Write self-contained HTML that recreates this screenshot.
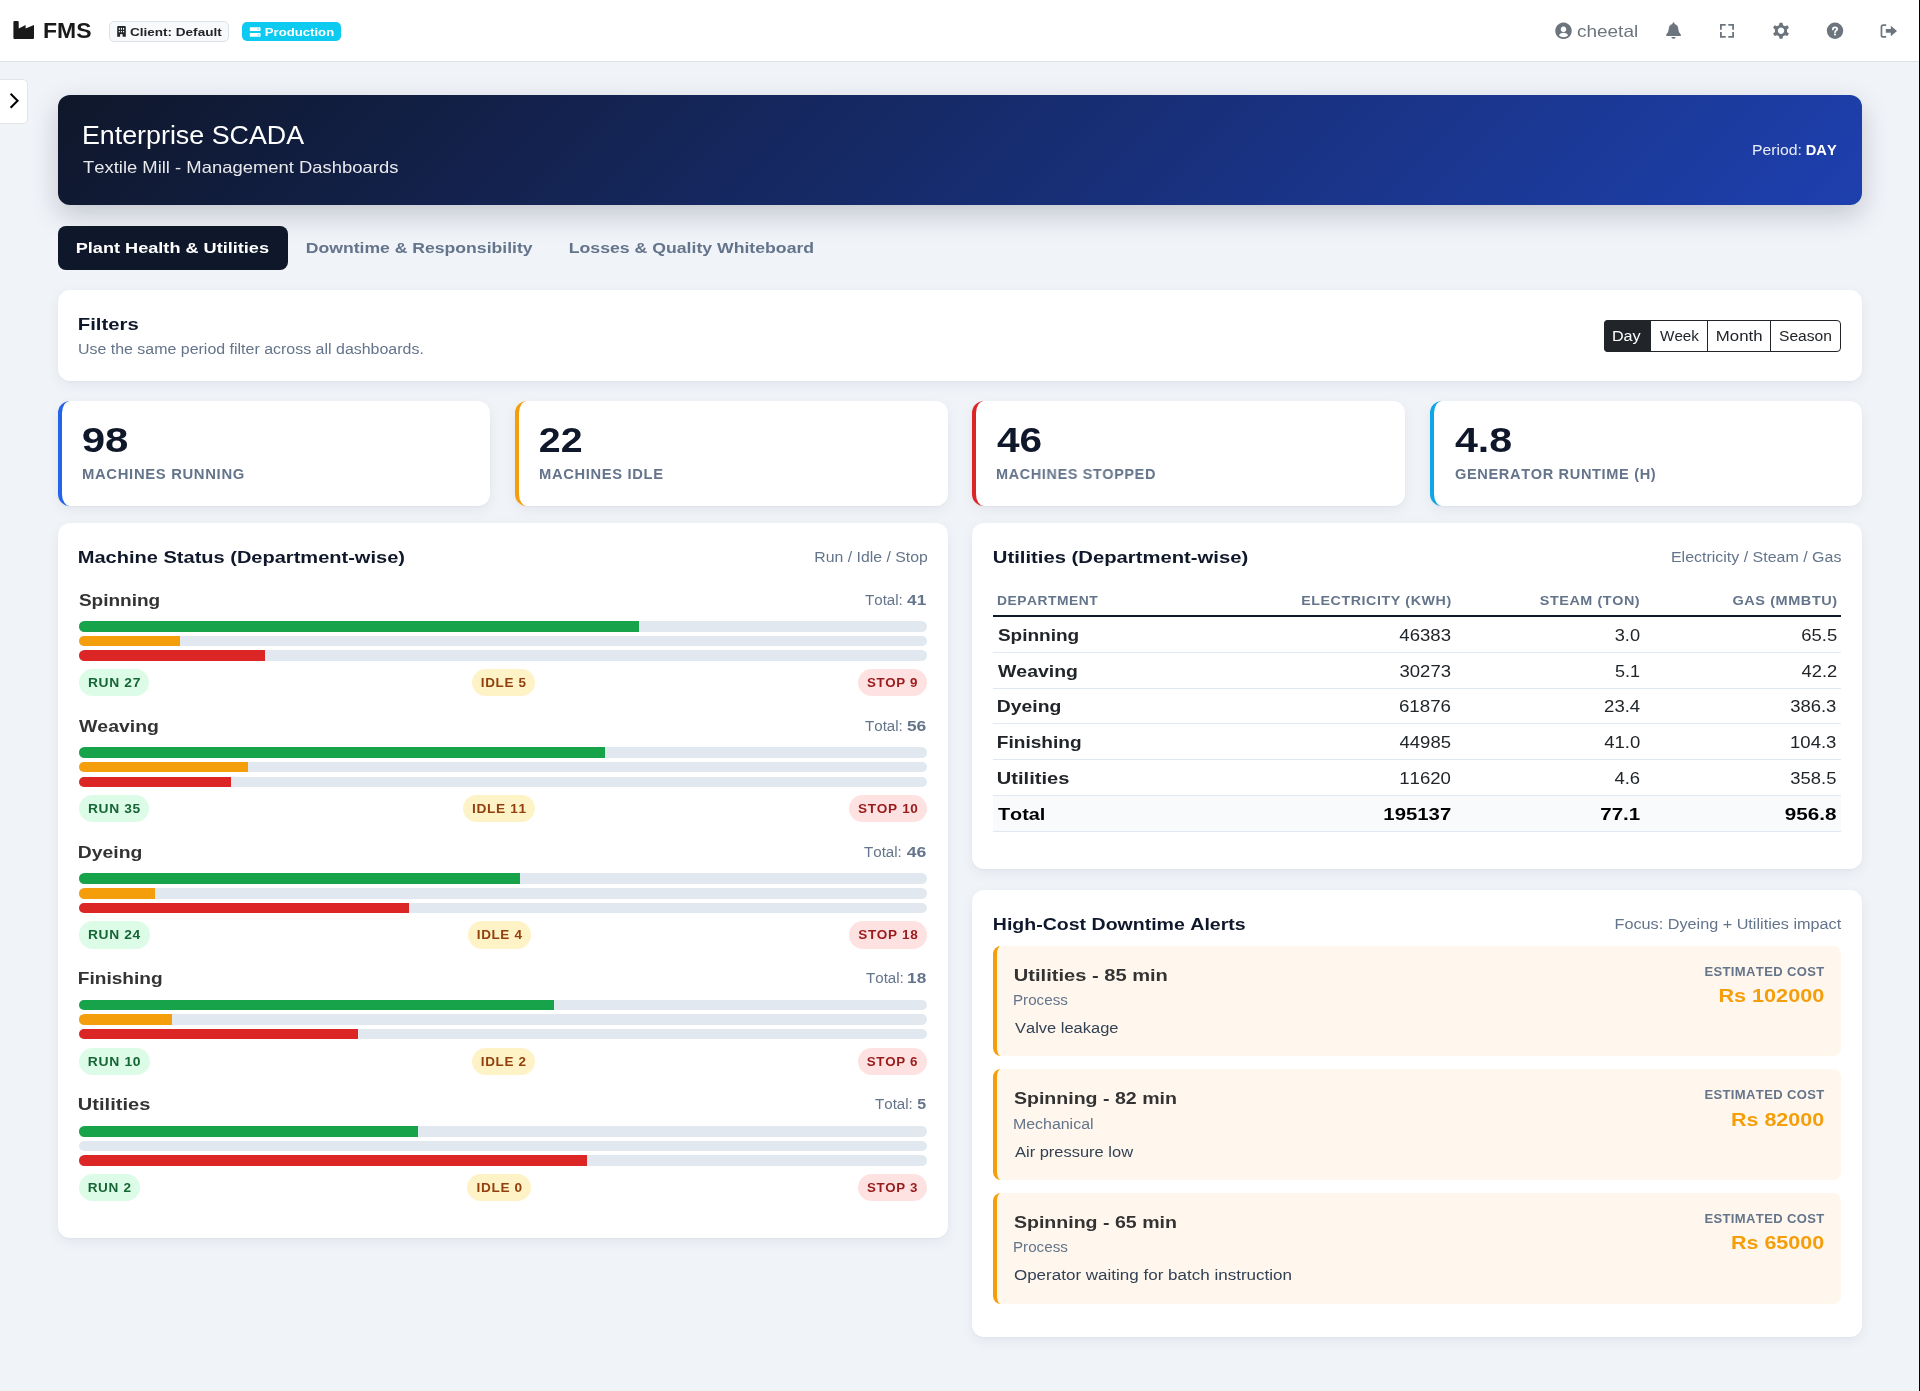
<!DOCTYPE html>
<html><head><meta charset="utf-8"><title>FMS - Enterprise SCADA</title>
<style>
*{box-sizing:border-box;margin:0;padding:0}
html,body{width:1920px;height:1391px;overflow:hidden}
body{position:relative;background:#f0f3f8;font-family:"Liberation Sans", sans-serif;font-kerning:none;font-variant-ligatures:none}
.tx{position:absolute;white-space:nowrap;will-change:transform}
.bx{position:absolute}
.card{position:absolute;background:#fff;border-radius:12px;box-shadow:0 4px 14px rgba(15,23,42,.06),0 1px 2px rgba(15,23,42,.03)}
svg{position:absolute;left:0;top:0;overflow:visible}
</style></head><body>
<div class="bx" style="left:0px;top:0px;width:1920px;height:62px;background:#fff;border-bottom:1px solid #dee2e6;"></div>
<div class="bx" style="left:1919px;top:0px;width:1px;height:1391px;background:#000;z-index:50;"></div>
<div class="bx" style="left:109px;top:21px;width:120px;height:21px;background:#f8f9fa;border:1px solid #dee2e6;border-radius:5px;"></div>
<div class="bx" style="left:242px;top:22px;width:99px;height:19px;background:#0dcaf0;border-radius:5px;"></div>
<div class="tx" style="left:43.48px;top:14.81px;font-size:22.75px;line-height:30px;font-weight:700;color:#1a1a1a;transform:scaleX(1.0107);transform-origin:1.52px 50%;">FMS</div>
<div class="tx" style="left:129.55px;top:24.29px;font-size:11px;line-height:16px;font-weight:700;color:#212529;transform:scaleX(1.2316);transform-origin:0.45px 50%;">Client: Default</div>
<div class="tx" style="left:264.66px;top:24.29px;font-size:11px;line-height:16px;font-weight:700;color:#fff;transform:scaleX(1.1937);transform-origin:0.74px 50%;">Production</div>
<div class="tx" style="left:1577.10px;top:19.28px;font-size:16.5px;line-height:24px;color:#6c757d;transform:scaleX(1.1517);transform-origin:0.70px 50%;">cheetal</div>
<svg width="1920" height="62" viewBox="0 0 1920 62" style="z-index:5">
<path fill="#1a1a1a" d="M14.4,21 H17.7 Q18.7,21 18.7,22 V28.4 L25.6,25 V28.4 L34,25 V38 Q34,39 33,39 H14.4 Q13.4,39 13.4,38 V22 Q13.4,21 14.4,21 Z"/>
<path fill="#212529" d="M118.2,26.1 H124.8 Q125.8,26.1 125.8,27.1 V36.8 H122.6 V34.6 Q122.6,33.9 121.35,33.9 Q120.1,33.9 120.1,34.6 V36.8 H117.2 V27.1 Q117.2,26.1 118.2,26.1 Z"/>
<g fill="#f8f9fa"><rect x="118.8" y="27.9" width="1.1" height="1.9"/><rect x="120.9" y="27.9" width="1.1" height="1.9"/><rect x="123" y="27.9" width="1.1" height="1.9"/>
<rect x="118.8" y="31" width="1.1" height="1.3"/><rect x="120.9" y="31" width="1.1" height="1.3"/><rect x="123" y="31" width="1.1" height="1.3"/></g>
<rect x="249.8" y="27.2" width="10.7" height="3.7" rx="0.6" fill="#fff"/>
<rect x="249.8" y="33.1" width="10.7" height="3.7" rx="0.6" fill="#fff"/>
<circle cx="258.2" cy="29.05" r="0.8" fill="#7dd3fc"/><circle cx="258.2" cy="34.95" r="0.8" fill="#7dd3fc"/>
<g fill="#6c757d">
<path fill-rule="evenodd" d="M1563.5,22.6 A8.25,8.25 0 1,1 1563.49,22.6 Z M1563.5,26.5 A2.8,2.8 0 1,0 1563.51,26.5 Z M1559,35.6 Q1559.8,32.8 1563.5,32.8 Q1567.2,32.8 1568.1,35.6 Q1566.3,37.2 1563.5,37.2 Q1560.8,37.2 1559,35.6 Z"/>
<path d="M1673.5,22.2 Q1674.6,22.5 1674.6,24 Q1678.2,25 1678.3,29 Q1678.4,32.4 1680.8,34.6 L1680.8,35.9 H1666.25 L1666.25,34.6 Q1668.6,32.4 1668.7,29 Q1668.8,25 1672.4,24 Q1672.4,22.5 1673.5,22.2 Z M1671.3,36.9 H1675.7 Q1675.2,38.8 1673.5,38.8 Q1671.8,38.8 1671.3,36.9 Z"/>
</g>
<g stroke="#6c757d" stroke-width="1.8" fill="none" stroke-linecap="square">
<path d="M1720.9,28.9 V24.9 H1724.8 M1729.2,24.9 H1733.1 V28.9 M1733.1,33 V36.9 H1729.2 M1724.8,36.9 H1720.9 V33"/>
</g>
<g fill="#6c757d">
<path fill-rule="evenodd" d="M1779.7,22.4 H1782.3 L1782.8,24.6 Q1783.8,24.9 1784.6,25.5 L1786.7,24.6 L1788,26.8 L1786.3,28.3 Q1786.5,29.4 1786.3,30.5 L1788,32 L1786.7,34.2 L1784.6,33.4 Q1783.8,34 1782.8,34.3 L1782.3,36.5 H1779.7 L1779.2,34.3 Q1778.2,34 1777.4,33.4 L1775.3,34.2 L1774,32 L1775.7,30.5 Q1775.5,29.4 1775.7,28.3 L1774,26.8 L1775.3,24.6 L1777.4,25.5 Q1778.2,24.9 1779.2,24.6 Z M1781,26.6 A2.85,2.85 0 1,0 1781.01,26.6 Z" transform="translate(0,1.25) translate(1781,29.45) scale(1.13) translate(-1781,-29.45)"/>
<circle cx="1835" cy="30.8" r="8.2"/>
</g><path d="M1886.2,25.05 H1883.2 Q1881.45,25.05 1881.45,26.8 V35.2 Q1881.45,36.95 1883.2,36.95 H1886.2" stroke="#6c757d" stroke-width="1.7" fill="none"/><g fill="#6c757d">
<path d="M1885.8,29.1 H1890.8 V25.75 L1897,31 L1890.8,36.2 V32.8 H1885.8 Z"/>
</g>
<g stroke="#fff" stroke-width="1.7" fill="none" stroke-linecap="round"><path d="M1832.8,29.4 Q1832.8,27.3 1835,27.3 Q1837.2,27.3 1837.2,29.1 Q1837.2,30.2 1835.9,30.8 Q1835,31.2 1835,32.3"/></g>
<circle cx="1835" cy="34.5" r="1.05" fill="#fff"/>
</svg>
<div class="bx" style="left:-8px;top:79px;width:36px;height:45px;background:#fff;border:1px solid #e3e5e8;border-radius:5px;"></div>
<svg width="40" height="130" viewBox="0 0 40 130"><path d="M10.6,93.8 L17.6,100.8 L10.6,107.8" stroke="#000" stroke-width="2" fill="none"/></svg>
<div class="bx" style="left:58px;top:95px;width:1804px;height:110px;border-radius:12px;background:linear-gradient(135deg,#0f172a 0%,#1e40af 100%);box-shadow:0 10px 28px rgba(15,23,42,.2);"></div>
<div class="tx" style="left:82.19px;top:116.27px;font-size:25.75px;line-height:38px;color:#fff;transform:scaleX(1.0418);transform-origin:2.11px 50%;">Enterprise SCADA</div>
<div class="tx" style="left:82.63px;top:154.68px;font-size:16.5px;line-height:25px;color:rgba(255,255,255,.9);transform:scaleX(1.1166);transform-origin:0.37px 50%;">Textile Mill - Management Dashboards</div>
<div class="tx" style="left:1752.29px;top:140.29px;font-size:14.75px;line-height:21px;color:rgba(255,255,255,.9);transform:scaleX(1.0684);transform-origin:1.21px 50%;">Period:</div>
<div class="tx" style="left:1806.12px;top:140.37px;font-size:14.5px;line-height:21px;font-weight:700;color:#fff;transform:scaleX(1.0064);transform-origin:30.38px 50%;">DAY</div>
<div class="bx" style="left:58px;top:226px;width:230px;height:44px;background:#0f172a;border-radius:8px;"></div>
<div class="tx" style="left:75.93px;top:236.97px;font-size:14.5px;line-height:22px;font-weight:700;color:#fff;transform:scaleX(1.2493);transform-origin:0.97px 50%;">Plant Health &amp; Utilities</div>
<div class="tx" style="left:306.03px;top:236.97px;font-size:14.5px;line-height:22px;font-weight:700;color:#64748b;transform:scaleX(1.2133);transform-origin:0.97px 50%;">Downtime &amp; Responsibility</div>
<div class="tx" style="left:568.53px;top:236.97px;font-size:14.5px;line-height:22px;font-weight:700;color:#64748b;transform:scaleX(1.2181);transform-origin:0.97px 50%;">Losses &amp; Quality Whiteboard</div>
<div class="card" style="left:58px;top:290px;width:1804px;height:91px;"></div>
<div class="tx" style="left:77.65px;top:311.48px;font-size:16.5px;line-height:26px;font-weight:700;color:#0f172a;transform:scaleX(1.2307);transform-origin:1.10px 50%;">Filters</div>
<div class="tx" style="left:77.61px;top:338.64px;font-size:14.75px;line-height:21px;color:#64748b;transform:scaleX(1.0819);transform-origin:1.14px 50%;">Use the same period filter across all dashboards.</div>
<div class="bx" style="left:1604px;top:320px;width:237px;height:31.5px;border:1px solid #212529;border-radius:4px;background:#fff;"></div>
<div class="bx" style="left:1604px;top:320px;width:47px;height:31.5px;background:#212529;border-radius:4px 0 0 4px;"></div>
<div class="bx" style="left:1707px;top:320px;width:1px;height:31.5px;background:#212529;"></div>
<div class="bx" style="left:1770px;top:320px;width:1px;height:31.5px;background:#212529;"></div>
<div class="tx" style="left:1612.39px;top:325.59px;font-size:14.75px;line-height:21px;color:#fff;transform:scaleX(1.0964);transform-origin:1.21px 50%;">Day</div>
<div class="tx" style="left:1659.64px;top:325.59px;font-size:14.75px;line-height:21px;color:#212529;transform:scaleX(1.0329);transform-origin:0.06px 50%;">Week</div>
<div class="tx" style="left:1715.59px;top:325.59px;font-size:14.75px;line-height:21px;color:#212529;transform:scaleX(1.1384);transform-origin:1.21px 50%;">Month</div>
<div class="tx" style="left:1779.03px;top:325.59px;font-size:14.75px;line-height:21px;color:#212529;transform:scaleX(1.0600);transform-origin:0.67px 50%;">Season</div>
<div class="card" style="left:58px;top:401px;width:432px;height:105px;border-left:4px solid #2563eb;"></div>
<div class="tx" style="left:82.20px;top:415.54px;font-size:34.5px;line-height:48px;font-weight:700;color:#0f172a;transform:scaleX(1.2183);transform-origin:1.20px 50%;">98</div>
<div class="tx" style="left:82.13px;top:463.97px;font-size:14.5px;line-height:20px;font-weight:700;color:#64748b;letter-spacing:0.650px;transform:scaleX(1.0222);transform-origin:0.97px 50%;">MACHINES RUNNING</div>
<div class="card" style="left:515px;top:401px;width:433px;height:105px;border-left:4px solid #f59e0b;"></div>
<div class="tx" style="left:539.20px;top:415.54px;font-size:34.5px;line-height:48px;font-weight:700;color:#0f172a;transform:scaleX(1.1394);transform-origin:1.20px 50%;">22</div>
<div class="tx" style="left:539.13px;top:463.97px;font-size:14.5px;line-height:20px;font-weight:700;color:#64748b;letter-spacing:0.650px;transform:scaleX(1.0145);transform-origin:0.97px 50%;">MACHINES IDLE</div>
<div class="card" style="left:972px;top:401px;width:433px;height:105px;border-left:4px solid #dc2626;"></div>
<div class="tx" style="left:996.88px;top:415.54px;font-size:34.5px;line-height:48px;font-weight:700;color:#0f172a;transform:scaleX(1.1755);transform-origin:0.52px 50%;">46</div>
<div class="tx" style="left:996.13px;top:463.97px;font-size:14.5px;line-height:20px;font-weight:700;color:#64748b;letter-spacing:0.650px;transform:scaleX(0.9935);transform-origin:0.97px 50%;">MACHINES STOPPED</div>
<div class="card" style="left:1430px;top:401px;width:432px;height:105px;border-left:4px solid #0ea5e9;"></div>
<div class="tx" style="left:1454.88px;top:415.54px;font-size:34.5px;line-height:48px;font-weight:700;color:#0f172a;transform:scaleX(1.1945);transform-origin:0.52px 50%;">4.8</div>
<div class="tx" style="left:1454.51px;top:463.97px;font-size:14.5px;line-height:20px;font-weight:700;color:#64748b;letter-spacing:0.650px;transform:scaleX(1.0039);transform-origin:0.59px 50%;">GENERATOR RUNTIME (H)</div>
<div class="card" style="left:58px;top:523px;width:890px;height:715px;"></div>
<div class="tx" style="left:78.30px;top:544.58px;font-size:16.5px;line-height:25px;font-weight:700;color:#0f172a;transform:scaleX(1.2138);transform-origin:1.10px 50%;">Machine Status (Department-wise)</div>
<div class="tx" style="left:821.55px;top:546.59px;font-size:14.75px;line-height:21px;color:#64748b;transform:scaleX(1.0727);transform-origin:105.15px 50%;">Run / Idle / Stop</div>
<div class="tx" style="left:78.92px;top:587.78px;font-size:16.5px;line-height:25px;font-weight:700;color:#333;transform:scaleX(1.1522);transform-origin:0.48px 50%;">Spinning</div>
<div class="tx" style="left:910.28px;top:589.17px;font-size:14.5px;line-height:22px;font-weight:700;color:#64748b;transform:scaleX(1.1867);transform-origin:15.72px 50%;">41</div>
<div class="tx" style="left:864.67px;top:589.09px;font-size:14.75px;line-height:22px;color:#64748b;transform:scaleX(1.0252);transform-origin:0.33px 50%;">Total:</div>
<div class="bx" style="left:79px;top:620.90px;width:848px;height:10.9px;border-radius:6px;background:#e2e8f0;overflow:hidden"><div style="width:559.68px;height:100%;background:#16a34a"></div></div>
<div class="bx" style="left:79px;top:635.70px;width:848px;height:10.5px;border-radius:6px;background:#e2e8f0;overflow:hidden"><div style="width:101.16px;height:100%;background:#f59e0b"></div></div>
<div class="bx" style="left:79px;top:650.30px;width:848px;height:10.6px;border-radius:6px;background:#e2e8f0;overflow:hidden"><div style="width:185.96px;height:100%;background:#dc2626"></div></div>
<div class="bx" style="left:79px;top:668.9px;width:70.25px;height:27.4px;background:#dcfce7;border-radius:14px;"></div>
<div class="tx" style="left:89.80px;top:674.08px;font-size:12.75px;line-height:18px;font-weight:700;color:#166534;letter-spacing:0.600px;transform:scaleX(1.0834);transform-origin:24.32px 50%;">RUN 27</div>
<div class="bx" style="left:471.93px;top:668.9px;width:63.26px;height:27.4px;background:#fef3c7;border-radius:14px;"></div>
<div class="tx" style="left:481.98px;top:674.08px;font-size:12.75px;line-height:18px;font-weight:700;color:#92400e;letter-spacing:0.600px;transform:scaleX(1.0576);transform-origin:21.59px 50%;">IDLE 5</div>
<div class="bx" style="left:857.88px;top:668.9px;width:69.12px;height:27.4px;background:#fee2e2;border-radius:14px;"></div>
<div class="tx" style="left:868.32px;top:674.08px;font-size:12.75px;line-height:18px;font-weight:700;color:#991b1b;letter-spacing:0.600px;transform:scaleX(1.0466);transform-origin:24.12px 50%;">STOP 9</div>
<div class="tx" style="left:79.38px;top:713.78px;font-size:16.5px;line-height:25px;font-weight:700;color:#333;transform:scaleX(1.1782);transform-origin:0.02px 50%;">Weaving</div>
<div class="tx" style="left:910.40px;top:715.17px;font-size:14.5px;line-height:22px;font-weight:700;color:#64748b;transform:scaleX(1.1977);transform-origin:15.60px 50%;">56</div>
<div class="tx" style="left:864.91px;top:715.09px;font-size:14.75px;line-height:22px;color:#64748b;transform:scaleX(1.0252);transform-origin:0.33px 50%;">Total:</div>
<div class="bx" style="left:79px;top:747.10px;width:848px;height:10.9px;border-radius:6px;background:#e2e8f0;overflow:hidden"><div style="width:525.76px;height:100%;background:#16a34a"></div></div>
<div class="bx" style="left:79px;top:761.90px;width:848px;height:10.5px;border-radius:6px;background:#e2e8f0;overflow:hidden"><div style="width:169.00px;height:100%;background:#f59e0b"></div></div>
<div class="bx" style="left:79px;top:776.50px;width:848px;height:10.6px;border-radius:6px;background:#e2e8f0;overflow:hidden"><div style="width:152.04px;height:100%;background:#dc2626"></div></div>
<div class="bx" style="left:79px;top:795.1px;width:70.36px;height:27.4px;background:#dcfce7;border-radius:14px;"></div>
<div class="tx" style="left:89.76px;top:800.28px;font-size:12.75px;line-height:18px;font-weight:700;color:#166534;letter-spacing:0.600px;transform:scaleX(1.0812);transform-origin:24.42px 50%;">RUN 35</div>
<div class="bx" style="left:462.94px;top:795.1px;width:72.22px;height:27.4px;background:#fef3c7;border-radius:14px;"></div>
<div class="tx" style="left:473.62px;top:800.28px;font-size:12.75px;line-height:18px;font-weight:700;color:#92400e;letter-spacing:0.600px;transform:scaleX(1.0745);transform-origin:25.43px 50%;">IDLE 11</div>
<div class="bx" style="left:848.73px;top:795.1px;width:78.27px;height:27.4px;background:#fee2e2;border-radius:14px;"></div>
<div class="tx" style="left:859.93px;top:800.28px;font-size:12.75px;line-height:18px;font-weight:700;color:#991b1b;letter-spacing:0.600px;transform:scaleX(1.0674);transform-origin:27.94px 50%;">STOP 10</div>
<div class="tx" style="left:78.30px;top:839.78px;font-size:16.5px;line-height:25px;font-weight:700;color:#333;transform:scaleX(1.1733);transform-origin:1.10px 50%;">Dyeing</div>
<div class="tx" style="left:910.40px;top:841.17px;font-size:14.5px;line-height:22px;font-weight:700;color:#64748b;transform:scaleX(1.2102);transform-origin:15.60px 50%;">46</div>
<div class="tx" style="left:864.45px;top:841.09px;font-size:14.75px;line-height:22px;color:#64748b;transform:scaleX(1.0252);transform-origin:0.33px 50%;">Total:</div>
<div class="bx" style="left:79px;top:873.30px;width:848px;height:10.9px;border-radius:6px;background:#e2e8f0;overflow:hidden"><div style="width:440.96px;height:100%;background:#16a34a"></div></div>
<div class="bx" style="left:79px;top:888.10px;width:848px;height:10.5px;border-radius:6px;background:#e2e8f0;overflow:hidden"><div style="width:75.72px;height:100%;background:#f59e0b"></div></div>
<div class="bx" style="left:79px;top:902.70px;width:848px;height:10.6px;border-radius:6px;background:#e2e8f0;overflow:hidden"><div style="width:330.12px;height:100%;background:#dc2626"></div></div>
<div class="bx" style="left:79px;top:921.3px;width:70.65px;height:27.4px;background:#dcfce7;border-radius:14px;"></div>
<div class="tx" style="left:89.76px;top:926.48px;font-size:12.75px;line-height:18px;font-weight:700;color:#166534;letter-spacing:0.600px;transform:scaleX(1.0807);transform-origin:24.57px 50%;">RUN 24</div>
<div class="bx" style="left:467.51px;top:921.3px;width:63.54px;height:27.4px;background:#fef3c7;border-radius:14px;"></div>
<div class="tx" style="left:477.55px;top:926.48px;font-size:12.75px;line-height:18px;font-weight:700;color:#92400e;letter-spacing:0.600px;transform:scaleX(1.0572);transform-origin:21.73px 50%;">IDLE 4</div>
<div class="bx" style="left:848.9px;top:921.3px;width:78.1px;height:27.4px;background:#fee2e2;border-radius:14px;"></div>
<div class="tx" style="left:859.95px;top:926.48px;font-size:12.75px;line-height:18px;font-weight:700;color:#991b1b;letter-spacing:0.600px;transform:scaleX(1.0618);transform-origin:28.01px 50%;">STOP 18</div>
<div class="tx" style="left:78.30px;top:965.78px;font-size:16.5px;line-height:25px;font-weight:700;color:#333;transform:scaleX(1.1560);transform-origin:1.10px 50%;">Finishing</div>
<div class="tx" style="left:910.32px;top:967.17px;font-size:14.5px;line-height:22px;font-weight:700;color:#64748b;transform:scaleX(1.1864);transform-origin:15.68px 50%;">18</div>
<div class="tx" style="left:865.55px;top:967.09px;font-size:14.75px;line-height:22px;color:#64748b;transform:scaleX(1.0252);transform-origin:0.33px 50%;">Total:</div>
<div class="bx" style="left:79px;top:999.50px;width:848px;height:10.9px;border-radius:6px;background:#e2e8f0;overflow:hidden"><div style="width:474.88px;height:100%;background:#16a34a"></div></div>
<div class="bx" style="left:79px;top:1014.30px;width:848px;height:10.5px;border-radius:6px;background:#e2e8f0;overflow:hidden"><div style="width:92.68px;height:100%;background:#f59e0b"></div></div>
<div class="bx" style="left:79px;top:1028.90px;width:848px;height:10.6px;border-radius:6px;background:#e2e8f0;overflow:hidden"><div style="width:279.24px;height:100%;background:#dc2626"></div></div>
<div class="bx" style="left:79px;top:1047.5px;width:70.63px;height:27.4px;background:#dcfce7;border-radius:14px;"></div>
<div class="tx" style="left:89.98px;top:1052.68px;font-size:12.75px;line-height:18px;font-weight:700;color:#166534;letter-spacing:0.600px;transform:scaleX(1.0906);transform-origin:24.34px 50%;">RUN 10</div>
<div class="bx" style="left:472.17px;top:1047.5px;width:63.05px;height:27.4px;background:#fef3c7;border-radius:14px;"></div>
<div class="tx" style="left:482.18px;top:1052.68px;font-size:12.75px;line-height:18px;font-weight:700;color:#92400e;letter-spacing:0.600px;transform:scaleX(1.0566);transform-origin:21.51px 50%;">IDLE 2</div>
<div class="bx" style="left:857.75px;top:1047.5px;width:69.25px;height:27.4px;background:#fee2e2;border-radius:14px;"></div>
<div class="tx" style="left:868.25px;top:1052.68px;font-size:12.75px;line-height:18px;font-weight:700;color:#991b1b;letter-spacing:0.600px;transform:scaleX(1.0490);transform-origin:24.13px 50%;">STOP 6</div>
<div class="tx" style="left:78.41px;top:1091.78px;font-size:16.5px;line-height:25px;font-weight:700;color:#333;transform:scaleX(1.2172);transform-origin:0.99px 50%;">Utilities</div>
<div class="tx" style="left:918.34px;top:1093.17px;font-size:14.5px;line-height:22px;font-weight:700;color:#64748b;transform:scaleX(1.0954);transform-origin:7.66px 50%;">5</div>
<div class="tx" style="left:875.17px;top:1093.09px;font-size:14.75px;line-height:22px;color:#64748b;transform:scaleX(1.0252);transform-origin:0.33px 50%;">Total:</div>
<div class="bx" style="left:79px;top:1125.70px;width:848px;height:10.9px;border-radius:6px;background:#e2e8f0;overflow:hidden"><div style="width:339.20px;height:100%;background:#16a34a"></div></div>
<div class="bx" style="left:79px;top:1140.50px;width:848px;height:10.5px;border-radius:6px;background:#e2e8f0;overflow:hidden"><div style="width:0.00px;height:100%;background:#f59e0b"></div></div>
<div class="bx" style="left:79px;top:1155.10px;width:848px;height:10.6px;border-radius:6px;background:#e2e8f0;overflow:hidden"><div style="width:508.20px;height:100%;background:#dc2626"></div></div>
<div class="bx" style="left:79px;top:1173.7px;width:61.21px;height:27.4px;background:#dcfce7;border-radius:14px;"></div>
<div class="tx" style="left:89.11px;top:1178.88px;font-size:12.75px;line-height:18px;font-weight:700;color:#166534;letter-spacing:0.600px;transform:scaleX(1.0641);transform-origin:20.50px 50%;">RUN 2</div>
<div class="bx" style="left:467.38px;top:1173.7px;width:63.52px;height:27.4px;background:#fef3c7;border-radius:14px;"></div>
<div class="tx" style="left:477.63px;top:1178.88px;font-size:12.75px;line-height:18px;font-weight:700;color:#92400e;letter-spacing:0.600px;transform:scaleX(1.0683);transform-origin:21.50px 50%;">IDLE 0</div>
<div class="bx" style="left:858.06px;top:1173.7px;width:68.94px;height:27.4px;background:#fee2e2;border-radius:14px;"></div>
<div class="tx" style="left:868.41px;top:1178.88px;font-size:12.75px;line-height:18px;font-weight:700;color:#991b1b;letter-spacing:0.600px;transform:scaleX(1.0424);transform-origin:24.13px 50%;">STOP 3</div>
<div class="card" style="left:972px;top:523px;width:890px;height:346px;"></div>
<div class="tx" style="left:992.76px;top:544.58px;font-size:16.5px;line-height:25px;font-weight:700;color:#0f172a;transform:scaleX(1.2275);transform-origin:0.99px 50%;">Utilities (Department-wise)</div>
<div class="tx" style="left:1683.66px;top:546.69px;font-size:14.75px;line-height:21px;color:#64748b;transform:scaleX(1.0833);transform-origin:156.84px 50%;">Electricity / Steam / Gas</div>
<div class="tx" style="left:997.15px;top:591.18px;font-size:12.75px;line-height:19px;font-weight:700;color:#64748b;letter-spacing:0.500px;transform:scaleX(1.0826);transform-origin:0.85px 50%;">DEPARTMENT</div>
<div class="tx" style="left:1316.87px;top:591.18px;font-size:12.75px;line-height:19px;font-weight:700;color:#64748b;letter-spacing:0.500px;transform:scaleX(1.1186);transform-origin:133.43px 50%;">ELECTRICITY (KWH)</div>
<div class="tx" style="left:1551.46px;top:591.18px;font-size:12.75px;line-height:19px;font-weight:700;color:#64748b;letter-spacing:0.500px;transform:scaleX(1.1282);transform-origin:87.94px 50%;">STEAM (TON)</div>
<div class="tx" style="left:1744.53px;top:591.18px;font-size:12.75px;line-height:19px;font-weight:700;color:#64748b;letter-spacing:0.500px;transform:scaleX(1.1370);transform-origin:91.47px 50%;">GAS (MMBTU)</div>
<div class="bx" style="left:993px;top:615px;width:848px;height:2px;background:#111827;"></div>
<div class="bx" style="left:993px;top:651.75px;width:848px;height:1px;background:#e2e8f0;"></div>
<div class="tx" style="left:997.52px;top:622.78px;font-size:16.5px;line-height:25px;font-weight:700;color:#212529;transform:scaleX(1.1522);transform-origin:0.48px 50%;">Spinning</div>
<div class="tx" style="left:1405.14px;top:622.78px;font-size:16.5px;line-height:25px;color:#212529;transform:scaleX(1.1247);transform-origin:45.16px 50%;">46383</div>
<div class="tx" style="left:1617.11px;top:622.78px;font-size:16.5px;line-height:25px;color:#212529;transform:scaleX(1.1026);transform-origin:22.29px 50%;">3.0</div>
<div class="tx" style="left:1804.58px;top:622.78px;font-size:16.5px;line-height:25px;color:#212529;transform:scaleX(1.1164);transform-origin:31.42px 50%;">65.5</div>
<div class="bx" style="left:993px;top:687.5px;width:848px;height:1px;background:#e2e8f0;"></div>
<div class="tx" style="left:997.98px;top:658.53px;font-size:16.5px;line-height:25px;font-weight:700;color:#212529;transform:scaleX(1.1782);transform-origin:0.02px 50%;">Weaving</div>
<div class="tx" style="left:1405.14px;top:658.53px;font-size:16.5px;line-height:25px;color:#212529;transform:scaleX(1.1209);transform-origin:45.16px 50%;">30273</div>
<div class="tx" style="left:1617.27px;top:658.53px;font-size:16.5px;line-height:25px;color:#212529;transform:scaleX(1.0919);transform-origin:22.13px 50%;">5.1</div>
<div class="tx" style="left:1804.72px;top:658.53px;font-size:16.5px;line-height:25px;color:#212529;transform:scaleX(1.1092);transform-origin:31.28px 50%;">42.2</div>
<div class="bx" style="left:993px;top:723.25px;width:848px;height:1px;background:#e2e8f0;"></div>
<div class="tx" style="left:996.90px;top:694.28px;font-size:16.5px;line-height:25px;font-weight:700;color:#212529;transform:scaleX(1.1733);transform-origin:1.10px 50%;">Dyeing</div>
<div class="tx" style="left:1405.14px;top:694.28px;font-size:16.5px;line-height:25px;color:#212529;transform:scaleX(1.1349);transform-origin:45.16px 50%;">61876</div>
<div class="tx" style="left:1607.77px;top:694.28px;font-size:16.5px;line-height:25px;color:#212529;transform:scaleX(1.1235);transform-origin:31.63px 50%;">23.4</div>
<div class="tx" style="left:1795.43px;top:694.28px;font-size:16.5px;line-height:25px;color:#212529;transform:scaleX(1.1182);transform-origin:40.57px 50%;">386.3</div>
<div class="bx" style="left:993px;top:759.0px;width:848px;height:1px;background:#e2e8f0;"></div>
<div class="tx" style="left:996.90px;top:730.03px;font-size:16.5px;line-height:25px;font-weight:700;color:#212529;transform:scaleX(1.1560);transform-origin:1.10px 50%;">Finishing</div>
<div class="tx" style="left:1405.11px;top:730.03px;font-size:16.5px;line-height:25px;color:#212529;transform:scaleX(1.1212);transform-origin:45.19px 50%;">44985</div>
<div class="tx" style="left:1607.93px;top:730.03px;font-size:16.5px;line-height:25px;color:#212529;transform:scaleX(1.1205);transform-origin:31.47px 50%;">41.0</div>
<div class="tx" style="left:1795.43px;top:730.03px;font-size:16.5px;line-height:25px;color:#212529;transform:scaleX(1.1220);transform-origin:40.57px 50%;">104.3</div>
<div class="bx" style="left:993px;top:794.75px;width:848px;height:1px;background:#e2e8f0;"></div>
<div class="tx" style="left:997.01px;top:765.78px;font-size:16.5px;line-height:25px;font-weight:700;color:#212529;transform:scaleX(1.2172);transform-origin:0.99px 50%;">Utilities</div>
<div class="tx" style="left:1405.06px;top:765.78px;font-size:16.5px;line-height:25px;color:#212529;transform:scaleX(1.1273);transform-origin:45.24px 50%;">11620</div>
<div class="tx" style="left:1617.19px;top:765.78px;font-size:16.5px;line-height:25px;color:#212529;transform:scaleX(1.1173);transform-origin:22.21px 50%;">4.6</div>
<div class="tx" style="left:1795.40px;top:765.78px;font-size:16.5px;line-height:25px;color:#212529;transform:scaleX(1.1143);transform-origin:40.60px 50%;">358.5</div>
<div class="bx" style="left:993px;top:795.75px;width:848px;height:34.75px;background:#f8fafc;"></div>
<div class="bx" style="left:993px;top:830.5px;width:848px;height:1px;background:#e2e8f0;"></div>
<div class="tx" style="left:997.81px;top:801.53px;font-size:16.5px;line-height:25px;font-weight:700;color:#000;transform:scaleX(1.2034);transform-origin:0.19px 50%;">Total</div>
<div class="tx" style="left:1395.97px;top:801.53px;font-size:16.5px;line-height:25px;font-weight:700;color:#000;transform:scaleX(1.2330);transform-origin:54.33px 50%;">195137</div>
<div class="tx" style="left:1607.75px;top:801.53px;font-size:16.5px;line-height:25px;font-weight:700;color:#000;transform:scaleX(1.2432);transform-origin:31.65px 50%;">77.1</div>
<div class="tx" style="left:1795.22px;top:801.53px;font-size:16.5px;line-height:25px;font-weight:700;color:#000;transform:scaleX(1.2513);transform-origin:40.78px 50%;">956.8</div>
<div class="card" style="left:972px;top:890px;width:890px;height:447px;"></div>
<div class="tx" style="left:992.65px;top:911.78px;font-size:16.5px;line-height:25px;font-weight:700;color:#0f172a;transform:scaleX(1.1838);transform-origin:1.10px 50%;">High-Cost Downtime Alerts</div>
<div class="tx" style="left:1634.95px;top:914.29px;font-size:14.75px;line-height:21px;color:#64748b;transform:scaleX(1.0994);transform-origin:206.05px 50%;">Focus: Dyeing + Utilities impact</div>
<div class="bx" style="left:993px;top:945.5px;width:848px;height:110.75px;background:#fff7ed;border-left:4px solid #f59e0b;border-radius:8px;"></div>
<div class="tx" style="left:1013.61px;top:962.58px;font-size:16.5px;line-height:25px;font-weight:700;color:#333;transform:scaleX(1.2179);transform-origin:0.99px 50%;">Utilities - 85 min</div>
<div class="tx" style="left:1013.39px;top:988.89px;font-size:14.75px;line-height:22px;color:#64748b;transform:scaleX(1.0299);transform-origin:1.21px 50%;">Process</div>
<div class="tx" style="left:1014.54px;top:1016.99px;font-size:14.75px;line-height:22px;color:#334155;transform:scaleX(1.1170);transform-origin:0.06px 50%;">Valve leakage</div>
<div class="tx" style="left:1707.03px;top:962.58px;font-size:12.75px;line-height:18px;font-weight:700;color:#64748b;letter-spacing:0.360px;transform:scaleX(1.0222);transform-origin:117.17px 50%;">ESTIMATED COST</div>
<div class="tx" style="left:1736.26px;top:982.76px;font-size:18px;line-height:27px;font-weight:700;color:#f59e0b;transform:scaleX(1.2013);transform-origin:87.34px 50%;">Rs 102000</div>
<div class="bx" style="left:993px;top:1069.25px;width:848px;height:110.75px;background:#fff7ed;border-left:4px solid #f59e0b;border-radius:8px;"></div>
<div class="tx" style="left:1014.12px;top:1086.33px;font-size:16.5px;line-height:25px;font-weight:700;color:#333;transform:scaleX(1.1854);transform-origin:0.48px 50%;">Spinning - 82 min</div>
<div class="tx" style="left:1013.39px;top:1112.64px;font-size:14.75px;line-height:22px;color:#64748b;transform:scaleX(1.0808);transform-origin:1.21px 50%;">Mechanical</div>
<div class="tx" style="left:1014.57px;top:1140.74px;font-size:14.75px;line-height:22px;color:#334155;transform:scaleX(1.1162);transform-origin:0.03px 50%;">Air pressure low</div>
<div class="tx" style="left:1707.03px;top:1086.33px;font-size:12.75px;line-height:18px;font-weight:700;color:#64748b;letter-spacing:0.360px;transform:scaleX(1.0222);transform-origin:117.17px 50%;">ESTIMATED COST</div>
<div class="tx" style="left:1746.27px;top:1106.51px;font-size:18px;line-height:27px;font-weight:700;color:#f59e0b;transform:scaleX(1.1948);transform-origin:77.33px 50%;">Rs 82000</div>
<div class="bx" style="left:993px;top:1193.0px;width:848px;height:110.75px;background:#fff7ed;border-left:4px solid #f59e0b;border-radius:8px;"></div>
<div class="tx" style="left:1014.12px;top:1210.08px;font-size:16.5px;line-height:25px;font-weight:700;color:#333;transform:scaleX(1.1854);transform-origin:0.48px 50%;">Spinning - 65 min</div>
<div class="tx" style="left:1013.39px;top:1236.39px;font-size:14.75px;line-height:22px;color:#64748b;transform:scaleX(1.0299);transform-origin:1.21px 50%;">Process</div>
<div class="tx" style="left:1013.90px;top:1264.49px;font-size:14.75px;line-height:22px;color:#334155;transform:scaleX(1.1537);transform-origin:0.70px 50%;">Operator waiting for batch instruction</div>
<div class="tx" style="left:1707.03px;top:1210.08px;font-size:12.75px;line-height:18px;font-weight:700;color:#64748b;letter-spacing:0.360px;transform:scaleX(1.0222);transform-origin:117.17px 50%;">ESTIMATED COST</div>
<div class="tx" style="left:1746.27px;top:1230.26px;font-size:18px;line-height:27px;font-weight:700;color:#f59e0b;transform:scaleX(1.1948);transform-origin:77.33px 50%;">Rs 65000</div>
</body></html>
